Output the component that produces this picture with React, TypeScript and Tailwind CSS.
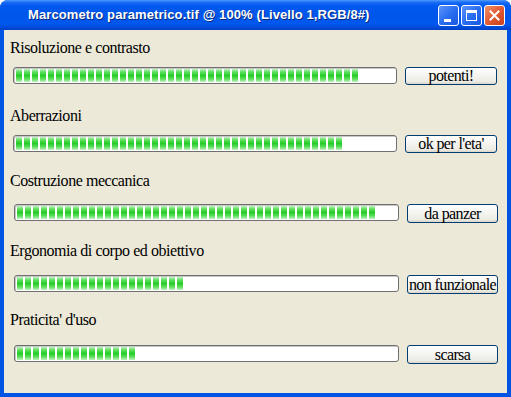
import React from "react";

type Row = {
  label: string;
  button: string;
  blocks: number;
  labelMt: string;
  barMt: string;
  barMl: string;
  barW: string;
  btnMl: string;
  btnW: string;
  btnH: string;
};

const rows: Row[] = [
  { label: "Risoluzione e contrasto", button: "potenti!", blocks: 43, labelMt: "mt-[9px]", barMt: "mt-[10px]", barMl: "ml-[9px]", barW: "w-[384px]", btnMl: "ml-[8px]", btnW: "w-[92px]", btnH: "h-[18px]" },
  { label: "Aberrazioni", button: "ok per l'eta'", blocks: 41, labelMt: "mt-[22px]", barMt: "mt-[10px]", barMl: "ml-[9px]", barW: "w-[384px]", btnMl: "ml-[8px]", btnW: "w-[92px]", btnH: "h-[18px]" },
  { label: "Costruzione meccanica", button: "da panzer", blocks: 45, labelMt: "mt-[19px]", barMt: "mt-[14px]", barMl: "ml-[10px]", barW: "w-[385px]", btnMl: "ml-[8px]", btnW: "w-[91px]", btnH: "h-[19px]" },
  { label: "Ergonomia di corpo ed obiettivo", button: "non funzionale", blocks: 21, labelMt: "mt-[19px]", barMt: "mt-[15px]", barMl: "ml-[10px]", barW: "w-[385px]", btnMl: "ml-[8px]", btnW: "w-[91px]", btnH: "h-[19px]" },
  { label: "Praticita' d'uso", button: "scarsa", blocks: 15, labelMt: "mt-[17px]", barMt: "mt-[16px]", barMl: "ml-[10px]", barW: "w-[385px]", btnMl: "ml-[8px]", btnW: "w-[91px]", btnH: "h-[19px]" },
];

function Progress({ blocks, cls }: { blocks: number; cls: string }) {
  return (
    <div className={`${cls} h-[17px] rounded-[3px] border border-[#6f6f6f] bg-white px-[2px] py-[1px] flex gap-[2px] shadow-[inset_1px_1px_0_#c8c8c8]`}>
      {Array.from({ length: blocks }).map((_, i) => (
        <span
          key={i}
          className="block h-full w-[6px] shrink-0 bg-[linear-gradient(to_bottom,#c2f2c2_0%,#58de58_25%,#28cc28_50%,#58de58_75%,#c2f2c2_100%)]"
        />
      ))}
    </div>
  );
}

function XPButton({ text, cls }: { text: string; cls: string }) {
  return (
    <div
      className={`${cls} flex items-center justify-center rounded-[3px] border border-[#003c74] bg-[linear-gradient(to_bottom,#ffffff_0%,#f6f6f3_40%,#ecebe4_85%,#d8d5c8_100%)] text-[16px] leading-[16px] tracking-[-0.6px] text-black whitespace-nowrap`}
    >
      {text}
    </div>
  );
}

export default function App() {
  return (
    <div className="w-[511px] h-[397px] flex flex-col bg-[#0054e3] rounded-t-[8px] overflow-hidden font-['Liberation_Serif',serif]">
      {/* title bar */}
      <div className="h-[30px] shrink-0 flex items-center relative bg-[linear-gradient(to_bottom,#4d9bff_0%,#1a6cf5_8%,#0058ee_20%,#0056ea_55%,#0058ee_80%,#004ad8_92%,#003fc4_100%)]">
        <span className="ml-[28px] text-white font-bold text-[13px] font-['Liberation_Sans',Arial,sans-serif] tracking-[0.1px] [text-shadow:1px_1px_0_#0a2a7a]">
          Marcometro parametrico.tif @ 100% (Livello 1,RGB/8#)
        </span>
        <div className="ml-auto mr-[6px] flex gap-[2px]">
          <div className="w-[21px] h-[21px] rounded-[3px] border border-white bg-[linear-gradient(135deg,#5d93f8_0%,#2a6ef0_50%,#1957e0_100%)] relative">
            <span className="absolute left-[5px] top-[13px] w-[7px] h-[3px] bg-white" />
          </div>
          <div className="w-[21px] h-[21px] rounded-[3px] border border-white bg-[linear-gradient(135deg,#5d93f8_0%,#2a6ef0_50%,#1957e0_100%)] relative">
            <span className="absolute left-[4px] top-[4px] w-[11px] h-[11px] border border-white border-t-[3px]" />
          </div>
          <div className="w-[21px] h-[21px] rounded-[3px] border border-white bg-[linear-gradient(135deg,#f0906a_0%,#e25b32_50%,#c8401c_100%)] flex items-center justify-center">
            <svg width="11" height="11" viewBox="0 0 11 11">
              <path d="M1.5 1.5 L9.5 9.5 M9.5 1.5 L1.5 9.5" stroke="white" strokeWidth="2" strokeLinecap="square" />
            </svg>
          </div>
        </div>
      </div>
      {/* body */}
      <div className="flex-1 mx-[4px] mb-[4px] bg-[#ece9d8] flex flex-col text-black">
        {rows.map((r) => (
          <div key={r.label} className="flex flex-col">
            <div className={`${r.labelMt} pl-[6px] h-[18px] leading-[18px] text-[16px] tracking-[-0.45px] whitespace-nowrap`}>{r.label}</div>
            <div className={`${r.barMt} flex items-start`}>
              <Progress blocks={r.blocks} cls={`${r.barMl} ${r.barW}`} />
              <XPButton text={r.button} cls={`${r.btnMl} ${r.btnW} ${r.btnH}`} />
            </div>
          </div>
        ))}
      </div>
    </div>
  );
}
